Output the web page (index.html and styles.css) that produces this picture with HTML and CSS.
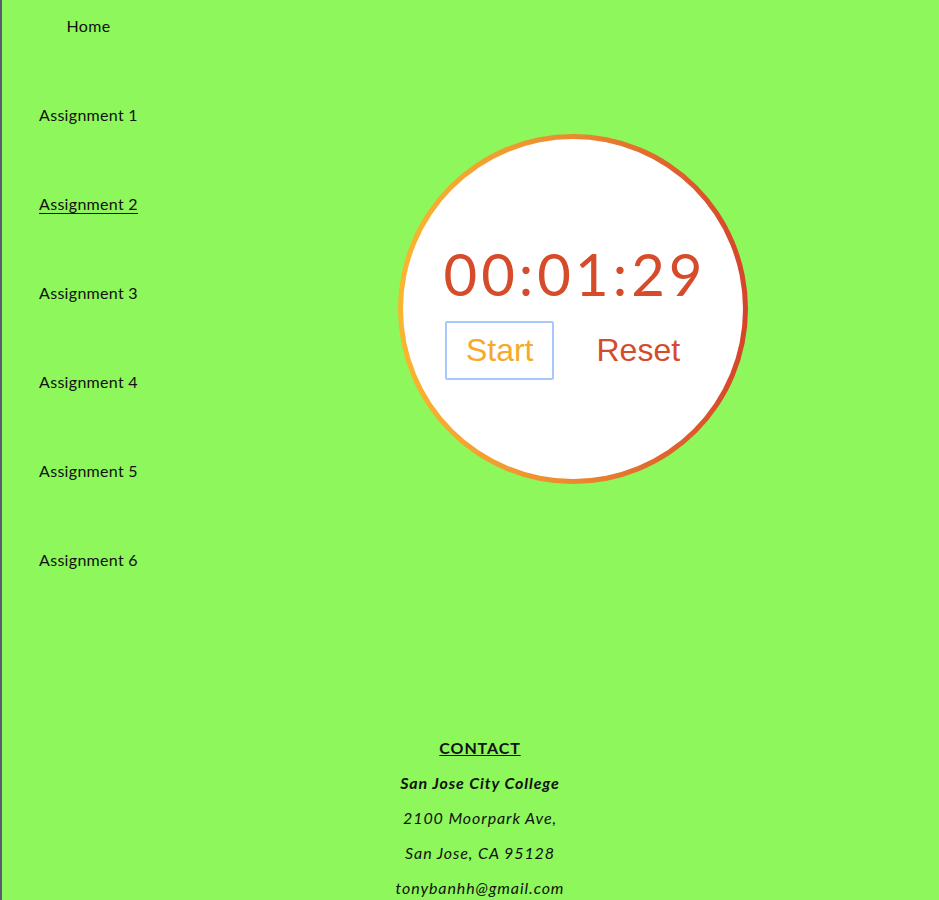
FILE: index.html
```html
<!DOCTYPE html>
<html lang="en">
<head>
<meta charset="utf-8">
<title>Stopwatch</title>
<link rel="stylesheet" href="styles.css">
</head>
<body>
<div class="page">
  <nav class="side-nav">
    <a class="nav-link" href="#">Home</a>
    <a class="nav-link" href="#">Assignment 1</a>
    <a class="nav-link active" href="#">Assignment 2</a>
    <a class="nav-link" href="#">Assignment 3</a>
    <a class="nav-link" href="#">Assignment 4</a>
    <a class="nav-link" href="#">Assignment 5</a>
    <a class="nav-link" href="#">Assignment 6</a>
  </nav>
  <main class="main">
    <div class="clock">
      <div class="clock-inner">
        <div class="time">00:01:29</div>
        <div class="controls">
          <button class="btn btn-start">Start</button>
          <button class="btn btn-reset">Reset</button>
        </div>
      </div>
    </div>
  </main>
</div>
<footer class="footer">
  <p class="contact-title">CONTACT</p>
  <p class="school">San Jose City College</p>
  <p class="addr">2100 Moorpark Ave,</p>
  <p class="addr">San Jose, CA 95128</p>
  <p class="addr">tonybanhh@gmail.com</p>
</footer>
</body>
</html>
```
FILE: styles.css
```css
html, body {
  margin: 0;
  padding: 0;
}
body {
  background: #8ef75b;
  border-left: 2px solid #5e5a6e;
  min-height: 900px;
  box-sizing: border-box;
  font-family: Lato, "Open Sans", sans-serif;
  color: #111;
}
.page {
  display: grid;
  grid-template-columns: 173px 1fr;
}
.side-nav {
  display: flex;
  flex-direction: column;
  align-items: center;
  padding-top: 16px;
  gap: 69px;
}
.nav-link {
  display: block;
  font-size: 16px;
  line-height: 20px;
  color: #111;
  text-decoration: none;
  letter-spacing: 0.3px;
}
.nav-link.active {
  text-decoration: underline;
  text-underline-offset: 3px;
}
.main {
  padding-top: 134px;
  padding-left: 223px;
}
.clock {
  width: 350px;
  height: 350px;
  border-radius: 50%;
  padding: 5px;
  box-sizing: border-box;
  background: linear-gradient(90deg, #f9b630 0%, #eb8a2f 50%, #d6432a 100%);
}
.clock-inner {
  width: 100%;
  height: 100%;
  border-radius: 50%;
  background: #fff;
  display: flex;
  flex-direction: column;
  align-items: center;
  padding-top: 101px;
  box-sizing: border-box;
}
.time {
  font-size: 58px;
  font-weight: 400;
  line-height: 68px;
  color: #d64b2a;
  letter-spacing: 4px;
  margin-left: 4px;
}
.controls {
  display: flex;
  gap: 21px;
  margin-top: 13px;
}
.btn {
  font-family: "Liberation Sans", Arial, sans-serif;
  font-size: 32px;
  line-height: 37px;
  padding: 9px 19px;
  background: #fff;
  border: 2px solid transparent;
  border-radius: 2px;
  cursor: pointer;
}
.btn-start {
  color: #f6a92a;
  border-color: #a8c8fb;
}
.btn-reset {
  color: #d64b2a;
}
.footer {
  margin-top: 168px;
  padding-left: 19px;
  text-align: center;
  font-size: 16px;
  line-height: 19px;
  color: #111;
  letter-spacing: 0.9px;
}
.footer p {
  margin: 16px 0;
}
.contact-title {
  font-weight: 700;
  text-decoration: underline;
}
.school {
  font-weight: 700;
  font-style: italic;
}
.addr {
  font-style: italic;
}
```
